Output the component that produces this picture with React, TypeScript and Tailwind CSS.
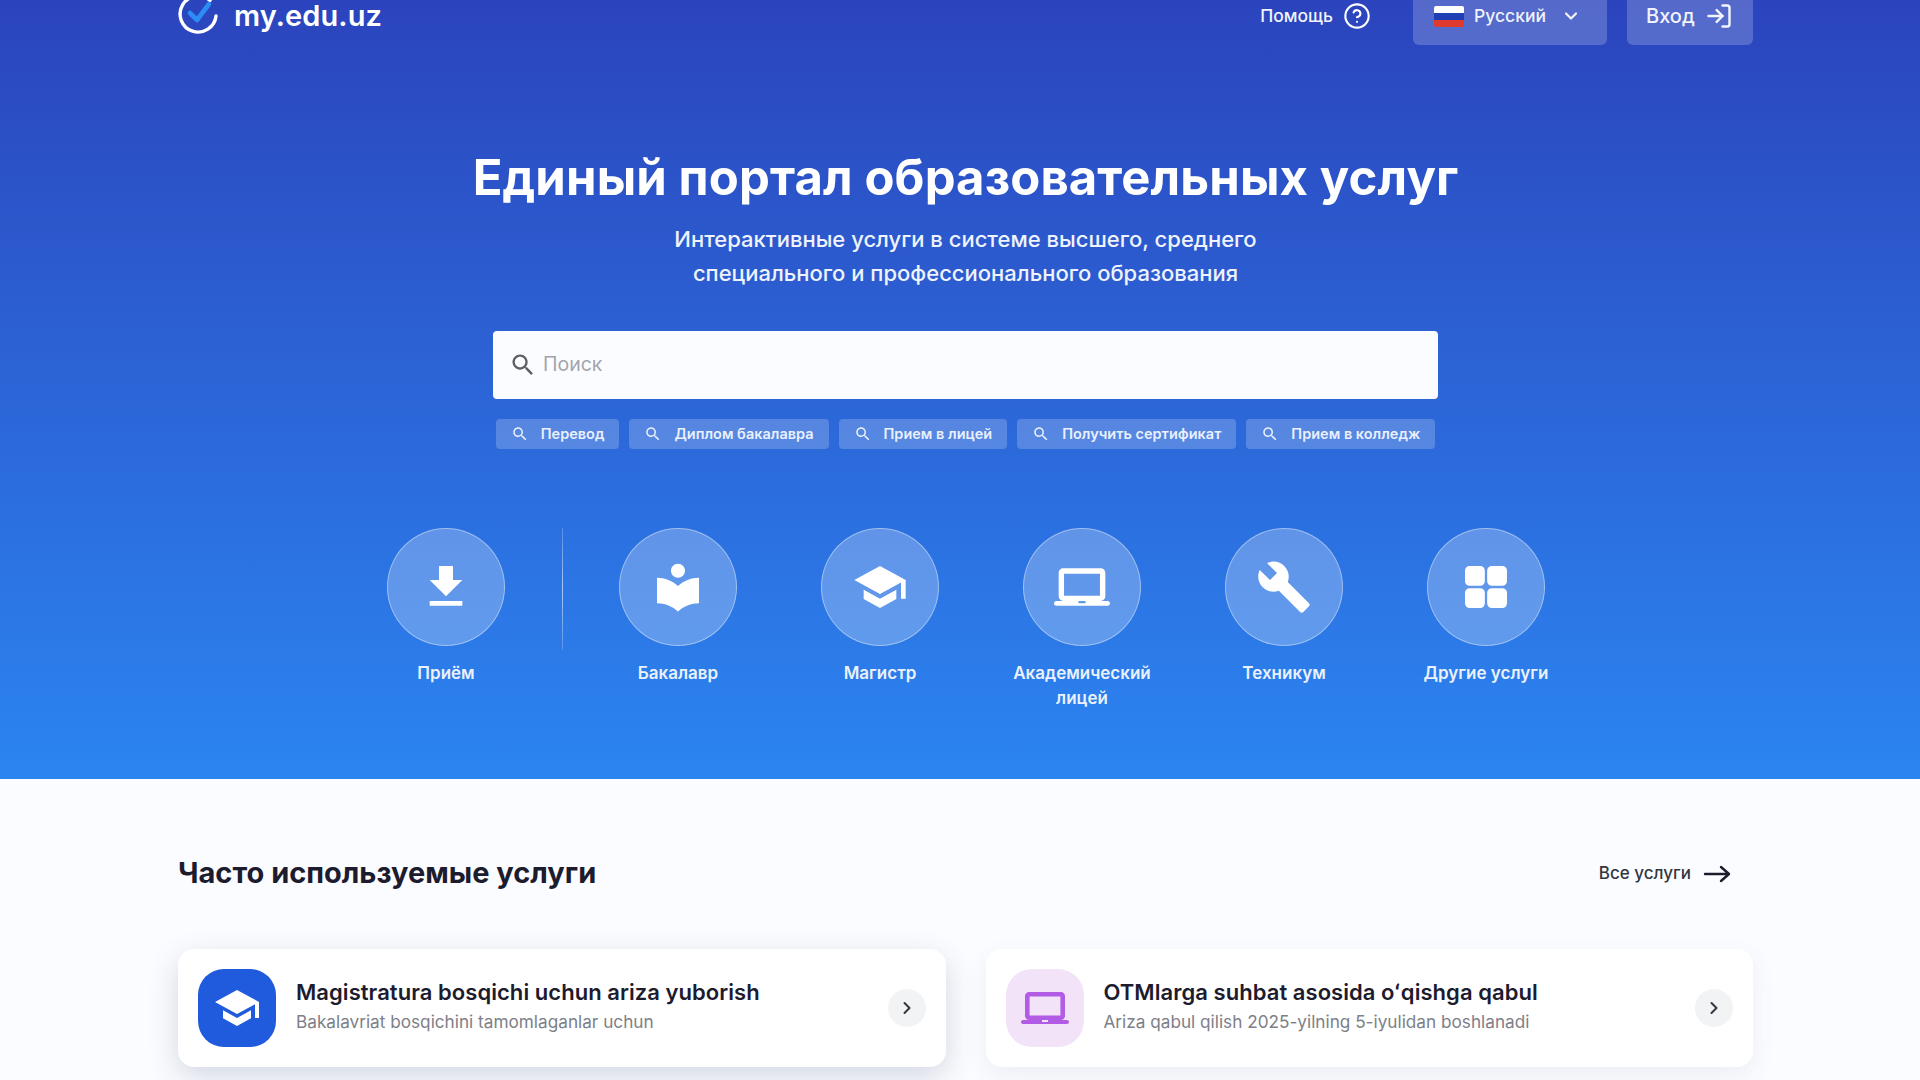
import React from 'react';
import { ChevronDown, ChevronRight, LogIn, CircleHelp } from 'lucide-react';

const SEARCH = 'M15.5 14h-.79l-.28-.27C15.41 12.59 16 11.11 16 9.5 16 5.91 13.09 3 9.5 3S3 5.91 3 9.5 5.91 16 9.5 16c1.61 0 3.09-.59 4.23-1.57l.27.28v.79l5 4.99L20.49 19l-4.99-5zm-6 0C7.01 14 5 11.99 5 9.5S7.01 5 9.5 5 14 7.01 14 9.5 11.99 14 9.5 14z';
const DOWNLOAD = 'M5 20h14v-2H5v2zM19 9h-4V3H9v6H5l7 7 7-7z';
const BOOK = 'M12 11.55C9.64 9.35 6.48 8 3 8v11c3.48 0 6.64 1.35 9 3.55 2.36-2.19 5.52-3.55 9-3.55V8c-3.48 0-6.64 1.35-9 3.55zM12 8c1.66 0 3-1.34 3-3s-1.34-3-3-3-3 1.34-3 3 1.34 3 3 3z';
const SCHOOL = 'M5 13.18v4L12 21l7-3.82v-4L12 17l-7-3.82zM12 3L1 9l11 6 9-4.91V17h2V9L12 3z';
const LAPTOP = 'M20 18c1.1 0 2-.9 2-2V6c0-1.1-.9-2-2-2H4c-1.1 0-2 .9-2 2v10c0 1.1.9 2 2 2H1c-.55 0-1 .45-1 1s.45 1 1 1h22c.55 0 1-.45 1-1s-.45-1-1-1h-3zM4.300 6.300h15.400v9.400H4.300V6.300zm6.200 11.700h3v1h-3v-1z';
const WRENCH = 'M22.7 19l-9.1-9.1c.9-2.3.4-5-1.5-6.9-2-2-5-2.4-7.4-1.3L9 6 6 9 1.6 4.7C.4 7.1.9 10.1 2.9 12.1c1.9 1.9 4.6 2.4 6.9 1.5l9.1 9.1c.4.4 1 .4 1.4 0l2.3-2.3c.5-.4.5-1.1.1-1.4z';
const GRID = 'M3 5a2 2 0 0 1 2-2h4.5a2 2 0 0 1 2 2v4.5a2 2 0 0 1-2 2H5a2 2 0 0 1-2-2V5zm9.5 0a2 2 0 0 1 2-2H19a2 2 0 0 1 2 2v4.5a2 2 0 0 1-2 2h-4.5a2 2 0 0 1-2-2V5zM3 14.5a2 2 0 0 1 2-2h4.5a2 2 0 0 1 2 2V19a2 2 0 0 1-2 2H5a2 2 0 0 1-2-2v-4.5zm9.5 0a2 2 0 0 1 2-2H19a2 2 0 0 1 2 2V19a2 2 0 0 1-2 2h-4.5a2 2 0 0 1-2-2v-4.5z';

const chips = ['Перевод', 'Диплом бакалавра', 'Прием в лицей', 'Получить сертификат', 'Прием в колледж'];

const categories = [
  { icon: BOOK, label: 'Бакалавр' },
  { icon: SCHOOL, label: 'Магистр' },
  { icon: LAPTOP, label: 'Академический лицей' },
  { icon: WRENCH, label: 'Техникум' },
  { icon: GRID, label: 'Другие услуги' },
];

function Glyph({ d, className }: { d: string; className?: string }) {
  return (
    <svg viewBox="0 0 24 24" fill="currentColor" className={className}>
      <path d={d} />
    </svg>
  );
}

function Logo() {
  return (
    <svg viewBox="0 0 40 40" fill="none" className="w-10 h-10 shrink-0">
      <path d="M32 4.5A18 18 0 1 0 38 20" stroke="#fff" strokeWidth="3.4" strokeLinecap="round" />
      <path d="M12 17l7 7L31 8" stroke="#2b8cf5" strokeWidth="4.6" strokeLinecap="round" strokeLinejoin="round" />
    </svg>
  );
}

function Flag() {
  return (
    <svg viewBox="0 0 30 21" className="w-[30px] h-[21px] rounded-[2px]">
      <rect width="30" height="7" fill="#fff" />
      <rect y="7" width="30" height="7" fill="#1f3fb5" />
      <rect y="14" width="30" height="7" fill="#e0392f" />
    </svg>
  );
}

function Category({ icon, label }: { icon: string; label: string }) {
  return (
    <div className="w-[172px] flex flex-col items-center text-center">
      <div className="w-[118px] h-[118px] rounded-full bg-white/25 border border-white/40 flex items-center justify-center">
        <Glyph d={icon} className="w-[56px] h-[56px] text-white" />
      </div>
      <div className="mt-[15px] text-[17px] leading-[24.5px] font-semibold text-[#eaf1fd]">{label}</div>
    </div>
  );
}

function ServiceCard({
  icon,
  title,
  subtitle,
  iconClass,
  shadowClass,
}: {
  icon: string;
  title: string;
  subtitle: string;
  iconClass: string;
  shadowClass: string;
}) {
  return (
    <div className={`h-[118px] rounded-[16px] bg-white flex items-center px-5 ${shadowClass}`}>
      <div className={`w-[78px] h-[78px] rounded-[26px] flex items-center justify-center shrink-0 ${iconClass}`}>
        <Glyph d={icon} className="w-[48px] h-[48px]" />
      </div>
      <div className="ml-5 flex-1 min-w-0 -mt-[5px]">
        <div className="text-[22px] leading-[30px] font-semibold text-[#1d1b2e] tracking-[0.05px]">{title}</div>
        <div className="text-[17.2px] leading-[24px] mt-[3px] text-[#7d8088]">{subtitle}</div>
      </div>
      <div className="w-[38px] h-[38px] rounded-full bg-[#f2f3f5] flex items-center justify-center shrink-0">
        <ChevronRight className="w-5 h-5 text-[#33363f]" strokeWidth={2.4} />
      </div>
    </div>
  );
}

export default function App() {
  return (
    <div className="h-[1080px] overflow-hidden bg-[#fbfcff] font-['Inter',sans-serif]">
      {/* Hero */}
      <section className="h-[779px] pl-[178px] pr-[167px] bg-gradient-to-b from-[#2b44bd] to-[#2b85f1]">
        <header className="h-[45px] flex items-center justify-between">
          <div className="flex items-center gap-4 -mt-[13px]">
            <Logo />
            <span className="text-[29px] font-semibold text-white leading-none tracking-[0.1px] -mt-[2px]">my.edu.uz</span>
          </div>
          <div className="flex items-stretch h-full">
            <div className="flex items-center gap-[10px] text-[17.5px] font-medium text-[#f0f3fc] mr-[42px] pb-[13px]">
              Помощь
              <CircleHelp className="w-[28px] h-[28px] text-white" strokeWidth={1.8} />
            </div>
            <div className="w-[194px] rounded-b-[6px] bg-white/20 flex items-center pl-[21px] pb-[13px] text-[17.5px] font-medium text-[#f0f3fc]">
              <Flag />
              <span className="ml-[10px]">Русский</span>
              <ChevronDown className="w-5 h-5 ml-[15px]" strokeWidth={2.6} />
            </div>
            <div className="w-[126px] ml-5 rounded-b-[6px] bg-white/20 flex items-center pl-[19px] pb-[13px] text-[20px] font-medium text-[#f0f3fc]">
              Вход
              <LogIn className="w-[28px] h-[28px] ml-[10px]" strokeWidth={2.1} />
            </div>
          </div>
        </header>

        <div className="pt-[103px]">
          <h1 className="text-center text-[49px] leading-[60px] font-bold text-white tracking-[0.12px]">
            Единый портал образовательных услуг
          </h1>
          <p className="mt-[14px] text-center text-[22px] leading-[34px] font-medium text-[#eef3fd]">
            Интерактивные услуги в системе высшего, среднего
            <br />
            специального и профессионального образования
          </p>

          <div className="mt-[41px] mx-auto w-[945px] h-[68px] rounded-[4px] bg-[#fbfcff] flex items-center px-[16px]">
            <Glyph d={SEARCH} className="w-[28px] h-[28px] text-[#5b5f66]" />
            <span className="ml-[6px] text-[19.5px] text-[#a2a5ab]">Поиск</span>
          </div>

          <div className="mt-[20px] flex justify-center gap-[10px]">
            {chips.map((chip) => (
              <div
                key={chip}
                className="h-[30px] rounded-[4px] bg-white/20 flex items-center pl-[15px] pr-[15px] text-[14.5px] font-semibold text-[#eaf0fd]"
              >
                <Glyph d={SEARCH} className="w-[18px] h-[18px] mr-[12px]" />
                {chip}
              </div>
            ))}
          </div>

          <div className="mt-[79px] ml-[182px] flex items-start gap-[30px]">
            <Category icon={DOWNLOAD} label="Приём" />
            <div className="w-px h-[122px] -mx-[0.5px] bg-gradient-to-b from-white/20 via-white/60 to-white/20" />
            {categories.map((item) => (
              <Category key={item.label} icon={item.icon} label={item.label} />
            ))}
          </div>
        </div>
      </section>

      {/* Popular services */}
      <section className="pl-[178px] pr-[167px] pt-[74px]">
        <div className="flex items-center justify-between h-[40px]">
          <h2 className="text-[29px] font-bold text-[#1d1b2e]">Часто используемые услуги</h2>
          <div className="flex items-center gap-[12px] text-[17px] font-medium text-[#33363f] pr-[22px] pt-[1px]">
            Все услуги
            <svg viewBox="0 0 28 20" fill="none" className="w-[28px] h-5 text-[#1d1b2e]">
              <path d="M2 10h24M18 3l8 7-8 7" stroke="currentColor" strokeWidth="2.4" strokeLinecap="round" strokeLinejoin="round" />
            </svg>
          </div>
        </div>
        <div className="mt-[56px] grid grid-cols-2 gap-[40px]">
          <ServiceCard
            icon={SCHOOL}
            title="Magistratura bosqichi uchun ariza yuborish"
            subtitle="Bakalavriat bosqichini tamomlaganlar uchun"
            iconClass="bg-[#1f5bdc] text-white"
            shadowClass="shadow-[0_10px_30px_rgba(50,70,110,0.2)]"
          />
          <ServiceCard
            icon={LAPTOP}
            title="OTMlarga suhbat asosida oʻqishga qabul"
            subtitle="Ariza qabul qilish 2025-yilning 5-iyulidan boshlanadi"
            iconClass="bg-[#f3e3f9] text-[#b25be4]"
            shadowClass="shadow-[0_8px_24px_rgba(60,80,120,0.08)]"
          />
        </div>
      </section>
    </div>
  );
}
